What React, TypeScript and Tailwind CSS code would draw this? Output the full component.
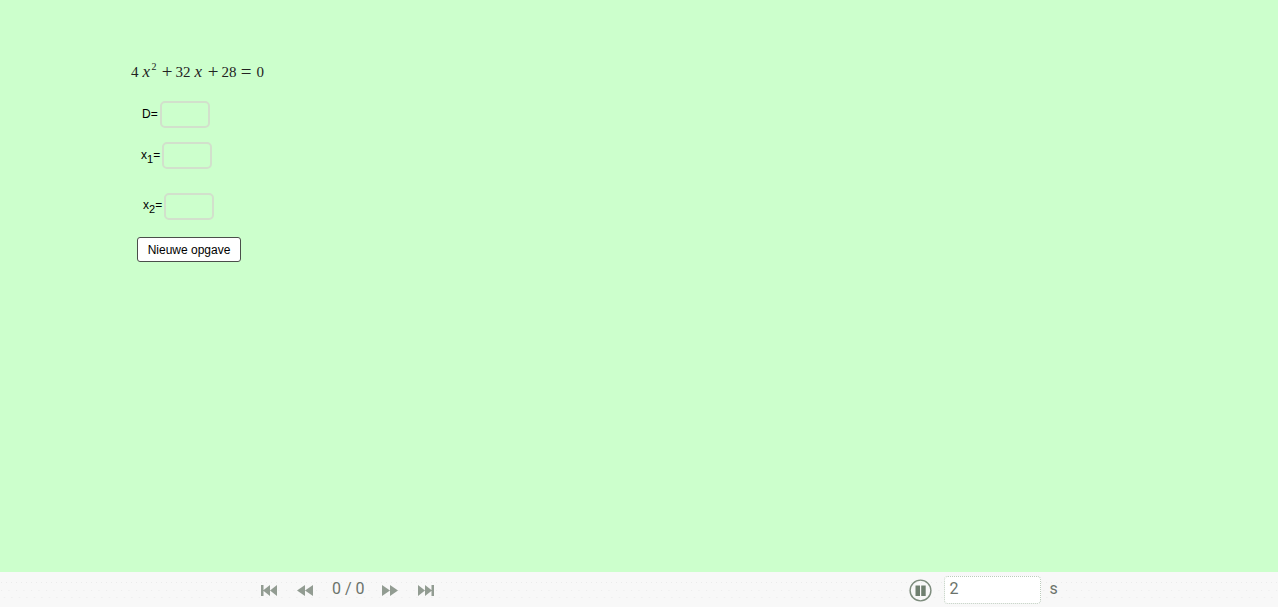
import React from "react";

const Field = ({ className }: { className: string }) => (
  <div className={"absolute h-[27px] w-[50px] rounded-[5px] border-2 border-[#d2e0cc] " + className} />
);

const Label = ({ sub, className }: { sub?: string; className: string }) => (
  <span className={"absolute text-[12px] leading-none text-black " + className}>
    {sub ? (
      <>
        x<span className="relative top-[4px] text-[11px]">{sub}</span>=
      </>
    ) : (
      "D="
    )}
  </span>
);

const SkipIcon = ({ flip, className }: { flip?: boolean; className?: string }) => (
  <svg width="16" height="11" viewBox="0 0 16 11" className={(flip ? "-scale-x-100 " : "") + (className ?? "")}>
    <path d="M0 0h2.5v11H0zM9 0v11L2 5.5zM16 0v11L9 5.5z" fill="#929c92" />
  </svg>
);

const RewindIcon = ({ flip, className }: { flip?: boolean; className?: string }) => (
  <svg width="16" height="11" viewBox="0 0 16 11" className={(flip ? "-scale-x-100 " : "") + (className ?? "")}>
    <path d="M8 0v11L0 5.5zM16 0v11L8 5.5z" fill="#929c92" />
  </svg>
);

export default function App() {
  return (
    <div className="flex h-[608px] w-[1280px] flex-col overflow-hidden bg-white font-['Liberation_Sans',sans-serif]">
      <div className="flex h-[607px] w-[1278px] flex-col">
        {/* applet canvas */}
        <div className="relative h-[572px] bg-[#ccffcc]">
          <div className="absolute left-[131px] top-[62px] flex h-5 items-center font-['Liberation_Serif',serif] text-[15px] leading-5 text-[#222]">
            <span>4</span>
            <i className="ml-[4px] w-[9px] text-[17px]">x</i>
            <span className="relative -top-[5px] w-[6px] text-[10px] leading-none">2</span>
            <span className="ml-[4px] w-[11px] text-center text-[19px]">+</span>
            <span className="ml-[3px]">32</span>
            <i className="ml-[4px] w-[9px] text-[17px]">x</i>
            <span className="ml-[4px] w-[11px] text-center text-[19px]">+</span>
            <span className="ml-[3px]">28</span>
            <span className="ml-[4px] w-[11px] text-center text-[19px]">=</span>
            <span className="ml-[5px]">0</span>
          </div>

          <Label className="left-[142px] top-[108px]" />
          <Field className="left-[159.5px] top-[101px]" />
          <Label sub="1" className="left-[141px] top-[149px]" />
          <Field className="left-[161.5px] top-[142px]" />
          <Label sub="2" className="left-[143px] top-[199px]" />
          <Field className="left-[163.5px] top-[193px]" />

          <button className="absolute left-[137px] top-[237px] h-[25px] w-[104px] rounded-[3px] border-[1.5px] border-[#4a4f4a] bg-white text-[12px] leading-none text-black">
            Nieuwe opgave
          </button>
        </div>

        {/* player bar */}
        <div className="relative flex h-[35px] items-center bg-[#f8f8f8]">
          <svg className="absolute inset-0 h-full w-full" aria-hidden="true">
            <defs>
              <pattern id="dotsA" width="5" height="35" patternUnits="userSpaceOnUse">
                <rect x="1" y="10" width="1" height="1" fill="#ebebeb" />
              </pattern>
              <pattern id="dotsB" width="7.5" height="35" patternUnits="userSpaceOnUse">
                <rect x="1" y="18" width="1" height="1" fill="#ebebeb" />
                <rect x="4" y="25" width="1" height="1" fill="#ebebeb" />
              </pattern>
            </defs>
            <rect width="100%" height="100%" fill="url(#dotsA)" />
            <rect width="100%" height="100%" fill="url(#dotsB)" />
          </svg>

          <div className="relative top-[1px] ml-[261px] flex items-center">
            <SkipIcon />
            <RewindIcon className="ml-[20px]" />
            <span className="relative -top-[2px] ml-[19px] w-[31px] whitespace-nowrap font-['Roboto',sans-serif] text-[16px] leading-none text-[#6b736b]">
              0 / 0
            </span>
            <RewindIcon flip className="ml-[19px]" />
            <SkipIcon flip className="ml-[20px]" />
          </div>

          <div className="relative ml-[475.5px] flex items-center">
            <svg width="23" height="23" viewBox="0 0 23 23" className="relative top-[1px] -ml-[1px]">
              <circle cx="11.5" cy="11.5" r="10.4" fill="none" stroke="#7d8c7d" strokeWidth="1.4" />
              <rect x="6.5" y="6.5" width="4.5" height="10.5" fill="#6f7f6f" />
              <rect x="12.2" y="6.5" width="4.5" height="10.5" fill="#6f7f6f" />
            </svg>
            <div className="ml-[12px] flex h-[28px] w-[97px] items-center rounded-[4px] border border-dotted border-[#bccbbc] bg-white pl-[5px] font-['Roboto',sans-serif] text-[16px] text-[#6b736b]">
              <span className="relative -top-[1px]">2</span>
            </div>
            <span className="relative -top-[1px] ml-[9px] font-['Roboto',sans-serif] text-[16px] text-[#6b736b]">s</span>
          </div>
        </div>
      </div>
    </div>
  );
}
